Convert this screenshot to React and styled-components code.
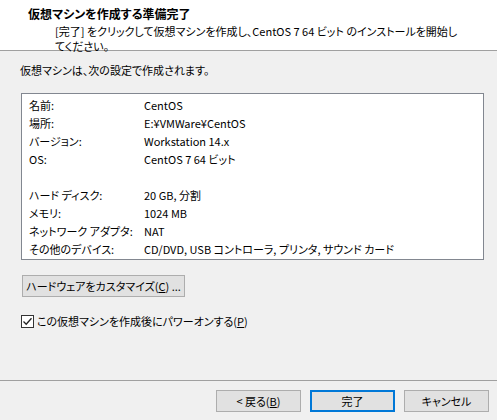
import React from "react";
import styled, { createGlobalStyle } from "styled-components";

const Global = createGlobalStyle`
  html, body { margin: 0; padding: 0; background: #f0f0f0; }
  body {
    font-family: "Noto Sans CJK JP", "Noto Sans", sans-serif;
    font-size: 11px;
    color: #000;
    font-feature-settings: "palt";
  }
`;

const Dialog = styled.div`
  width: 497px;
  height: 420px;
  display: flex;
  flex-direction: column;
  background: #f0f0f0;
  overflow: hidden;
`;

const Header = styled.header`
  height: 51px;
  background: #fff;
  border-bottom: 1px solid #a0a0a0;
  box-sizing: border-box;
  padding: 6px 20px 0 28px;
`;

const Title = styled.h1`
  margin: 0;
  font-size: 12px;
  font-weight: 700;
  line-height: 16px;
`;

const Subtitle = styled.p`
  margin: 2px 0 0 27px;
  line-height: 15px;
  white-space: nowrap;
`;

const Body = styled.main`
  flex: 1;
  display: flex;
  flex-direction: column;
  padding: 11px 13px 0 21px;
`;

const Intro = styled.div`
  line-height: 16px;
  margin-left: -1px;
`;

const Summary = styled.div`
  margin-top: 15px;
  height: 167px;
  box-sizing: border-box;
  background: #fff;
  border: 1px solid #828790;
  padding: 2px 0 0 7px;
  display: grid;
  grid-template-columns: 115px 1fr;
  grid-auto-rows: 18px;
  align-items: center;
`;

const Label = styled.span`
  white-space: nowrap;
`;

const Value = styled.span`
  white-space: nowrap;
`;

const Spacer = styled.div`
  grid-column: 1 / -1;
`;

const Button = styled.button`
  font: inherit;
  font-feature-settings: "palt";
  color: #000;
  height: 22px;
  box-sizing: border-box;
  background: #e1e1e1;
  border: ${(p) => (p.$default ? "2px solid #0078d7" : "1px solid #adadad")};
  padding: 0;
  display: inline-flex;
  align-items: center;
  justify-content: center;
  white-space: nowrap;
  cursor: default;
  width: ${(p) => (p.$width ? `${p.$width}px` : "auto")};
`;

const CustomizeRow = styled.div`
  margin-top: 15px;
  display: flex;
  margin-left: 1px;
`;

const CheckRow = styled.label`
  margin-top: 16px;
  display: flex;
  align-items: center;
  gap: 3px;
`;

const CheckBox = styled.span`
  width: 13px;
  height: 13px;
  box-sizing: border-box;
  border: 1px solid #333;
  background: #fff;
  display: inline-flex;
  align-items: center;
  justify-content: center;
`;

const Footer = styled.footer`
  height: 40px;
  border-top: 1px solid #a0a0a0;
  box-sizing: border-box;
  display: flex;
  justify-content: flex-end;
  align-items: flex-start;
  gap: 9px;
  padding: 9px 8px 0 0;
`;

const rows = [
  ["名前:", "CentOS"],
  ["場所:", "E:¥VMWare¥CentOS"],
  ["バージョン:", "Workstation 14.x"],
  ["OS:", "CentOS 7 64 ビット"],
  null,
  ["ハード ディスク:", "20 GB, 分割"],
  ["メモリ:", "1024 MB"],
  ["ネットワーク アダプタ:", "NAT"],
  ["その他のデバイス:", "CD/DVD, USB コントローラ, プリンタ, サウンド カード"],
];

export default function App() {
  return (
    <Dialog>
      <Global />
      <Header>
        <Title>仮想マシンを作成する準備完了</Title>
        <Subtitle>
          [完了] をクリックして仮想マシンを作成し、CentOS 7 64 ビット のインストールを開始し
          <br />
          てください。
        </Subtitle>
      </Header>
      <Body>
        <Intro>仮想マシンは、次の設定で作成されます。</Intro>
        <Summary>
          {rows.map((r, i) =>
            r ? (
              <React.Fragment key={i}>
                <Label>{r[0]}</Label>
                <Value>{r[1]}</Value>
              </React.Fragment>
            ) : (
              <Spacer key={i} />
            )
          )}
        </Summary>
        <CustomizeRow>
          <Button $width={163}>
            ハードウェアをカスタマイズ(<u>C</u>) ...
          </Button>
        </CustomizeRow>
        <CheckRow>
          <CheckBox>
            <svg width="11" height="11" viewBox="0 0 11 11">
              <path d="M1.5 5.5 L4.2 8.2 L9.5 2.2" fill="none" stroke="#222" strokeWidth="1.3" />
            </svg>
          </CheckBox>
          <span>
            この仮想マシンを作成後にパワーオンする(<u>P</u>)
          </span>
        </CheckRow>
      </Body>
      <Footer>
        <Button $width={85}>
          &lt; 戻る(<u>B</u>)
        </Button>
        <Button $width={85} $default>
          完了
        </Button>
        <Button $width={85}>キャンセル</Button>
      </Footer>
    </Dialog>
  );
}
